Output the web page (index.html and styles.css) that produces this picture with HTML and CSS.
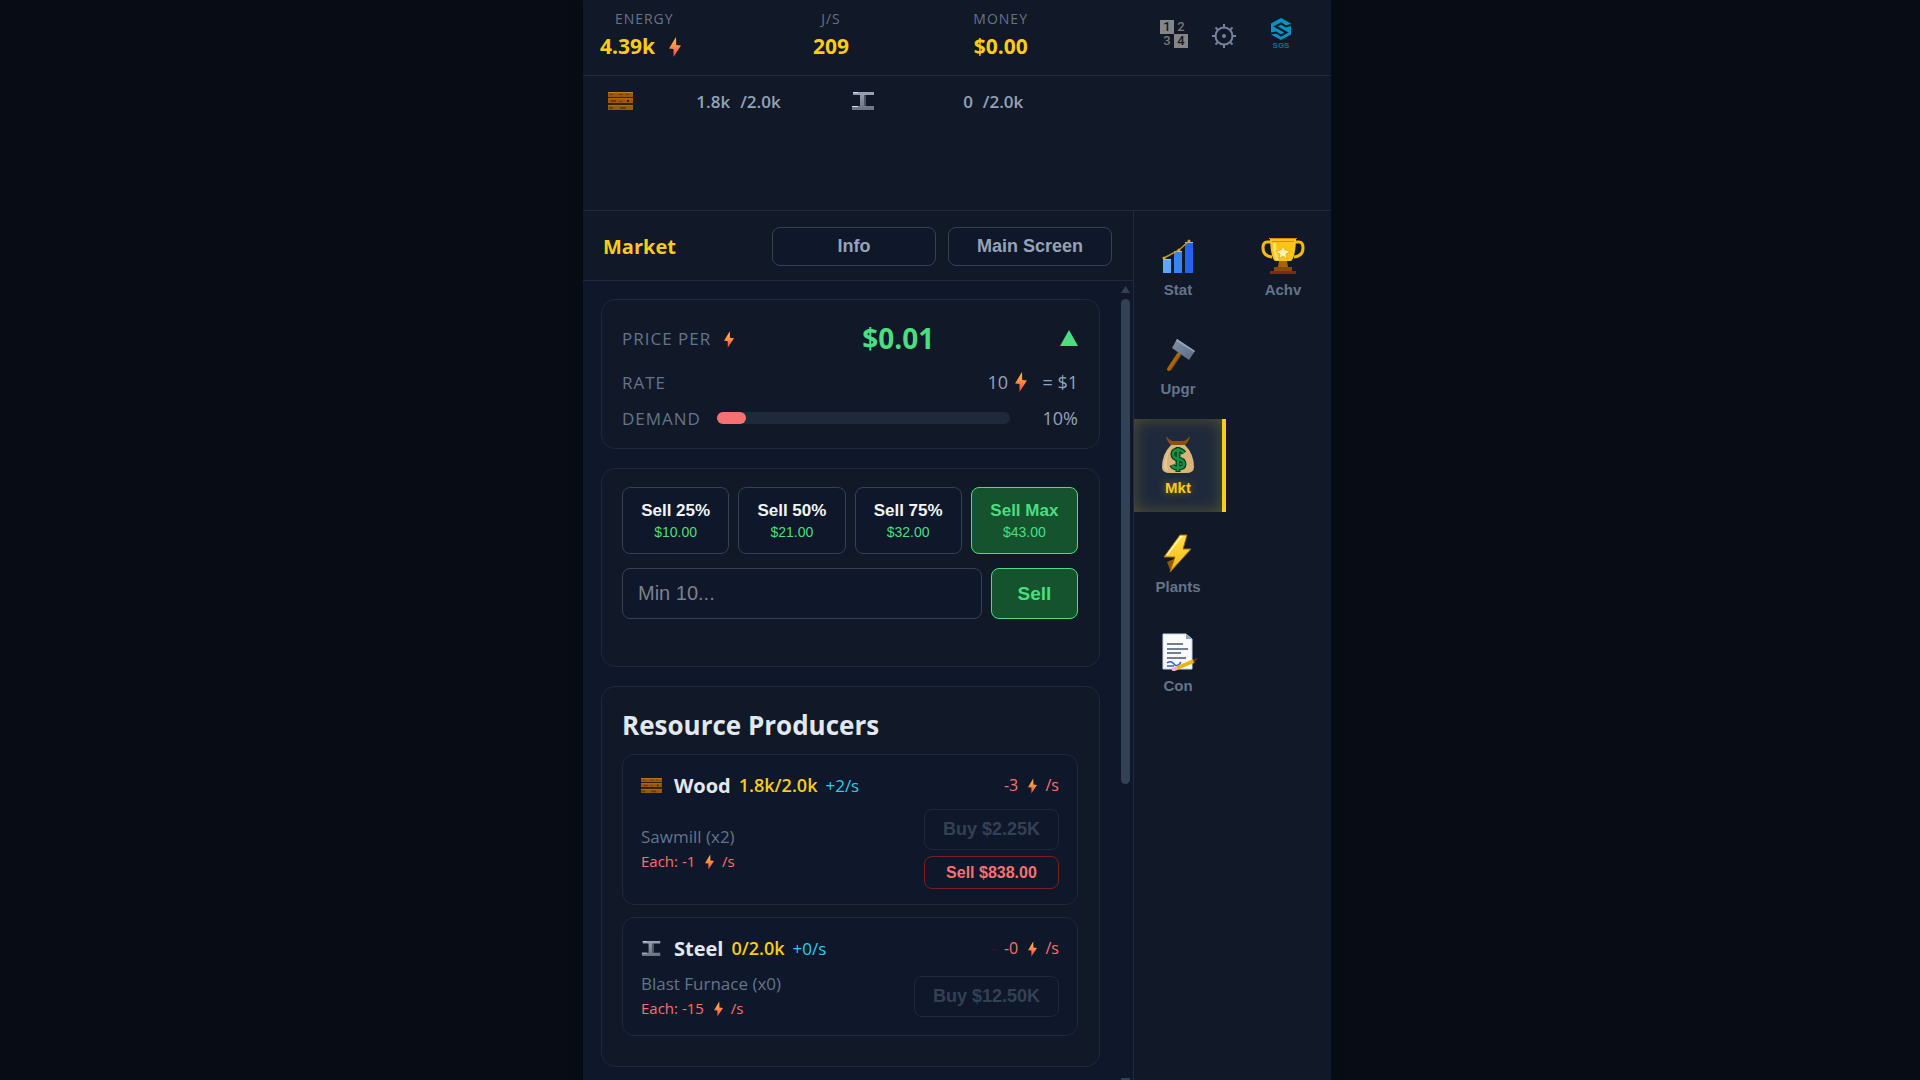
FILE: index.html
```html
<!DOCTYPE html>
<html lang="en">
<head>
<meta charset="utf-8">
<meta name="viewport" content="width=device-width, initial-scale=1">
<title>Market</title>
<link rel="stylesheet" href="styles.css">
</head>
<body>
<svg class="defs" aria-hidden="true">
  <defs>
    <linearGradient id="boltFill" x1="0" y1="0" x2="0" y2="1"><stop offset="0" stop-color="#ffbf47"/><stop offset=".5" stop-color="#ff8a45"/><stop offset="1" stop-color="#ef3f4a"/></linearGradient>
    <linearGradient id="steelFill" x1="0" y1="0" x2="0" y2="1"><stop offset="0" stop-color="#9ca3af"/><stop offset="1" stop-color="#6b7280"/></linearGradient>
    <linearGradient id="plantFill" x1="0" y1="0" x2="0" y2="1"><stop offset="0" stop-color="#ffe04a"/><stop offset="1" stop-color="#f5b80c"/></linearGradient>
    <linearGradient id="headFill" x1="0" y1="0" x2="1" y2="1"><stop offset="0" stop-color="#8391a7"/><stop offset="1" stop-color="#5b6a80"/></linearGradient>
    <symbol id="bolt" viewBox="0 0 12 20"><path fill="url(#boltFill)" d="M7 0 0 11.500 4.500 12 4.500 20 12 8.500 7.200 8Z"/></symbol>
    <symbol id="wood" viewBox="0 0 25 18">
      <path fill="#9a5a0e" d="M0 0h25v5H0zM0 6h25v5H0zM0 13h25v5H0z"/>
      <path fill="#c07a1a" d="M0 0h25v1H0z"/>
      <path fill="#b06c14" d="M0 6h25v1H0zM0 13h25v1H0z"/>
      <path fill="#6b3d0a" d="M2 2h3v1H2zM11 2h4v1h-4zM18 2h3v1h-3zM3 8h5v2H3zM11 9h3v1h-3zM1 15h4v2H1zM12 15h6v2h-6z"/>
      <path fill="#3a2006" d="M19 8h2v2h-2zM0 5h25v1H0zM0 11h25v2H0z"/>
    </symbol>
    <symbol id="steel" viewBox="0 0 23 18"><path fill="url(#steelFill)" d="M1 0h21v3h-8v11h8v4H0v-4h8V3H1z"/><path fill="#d6dae0" d="M1 0h5v1H1zM0 14h6v1H0z"/><path fill="#4b5563" d="M12 3h2v11h-2z"/></symbol>
  </defs>
</svg>

<div class="app">
  <header class="topbar">
    <div class="stats">
      <div class="stat"><span class="stat-label">ENERGY</span><span class="stat-value">4.39k <svg class="bolt bolt-lg"><use href="#bolt"/></svg></span></div>
      <div class="stat"><span class="stat-label">J/S</span><span class="stat-value">209</span></div>
      <div class="stat"><span class="stat-label">MONEY</span><span class="stat-value">$0.00</span></div>
    </div>
    <div class="tools">
      <button class="tool tool-num" aria-label="Number format">
        <span class="num on">1</span><span class="num">2</span><span class="num">3</span><span class="num on">4</span>
      </button>
      <button class="tool" aria-label="Settings">
        <svg width="24" height="24" viewBox="0 0 24 24" fill="none" stroke="#7683a0" stroke-width="2"><circle cx="12" cy="12" r="8.500"/><path d="M12 0v3M12 21v3M0 12h3M21 12h3M3.500 3.500l2 2M18.500 18.500l2 2M3.500 20.500l2-2M18.500 5.500l2-2"/><circle cx="12" cy="12" r="1" fill="#7683a0"/></svg>
      </button>
      <a class="logo" href="#" aria-label="SGS">
        <svg width="20" height="22" viewBox="0 0 20 22"><path fill="#0794c4" d="M10 0 20 5.500v11L10 22 0 16.500v-11z"/><path fill="none" stroke="#111827" stroke-width="2" d="M20 7 15 8.500 10 5.500 4.500 8.500 15.500 14.500 10 17.500 5 14.500 0 15.500"/></svg>
        <span>SGS</span>
      </a>
    </div>
  </header>

  <section class="resources">
    <div class="resource"><svg class="res-icon" width="25" height="18"><use href="#wood"/></svg><span class="res-amount"><span>1.8k</span><span>/2.0k</span></span></div>
    <div class="resource"><svg class="res-icon" width="25" height="18"><use href="#steel"/></svg><span class="res-amount"><span>0</span><span>/2.0k</span></span></div>
  </section>

  <div class="main">
    <main class="panel">
      <div class="panel-head">
        <h1>Market</h1>
        <button class="head-btn">Info</button>
        <button class="head-btn">Main Screen</button>
      </div>
      <div class="panel-body">
        <div class="cards">
          <section class="card prices">
            <div class="row row-price"><span class="label">PRICE PER <svg class="bolt bolt-md"><use href="#bolt"/></svg></span><strong class="price">$0.01</strong><svg class="up" width="18" height="16" viewBox="0 0 18 16"><path fill="#4ade80" d="M9 0 18 16H0z"/></svg></div>
            <div class="row row-rate"><span class="label">RATE</span><span class="value">10 <svg class="bolt bolt-lg"><use href="#bolt"/></svg> = $1</span></div>
            <div class="row row-demand"><span class="label">DEMAND</span><div class="meter"><div class="meter-fill" style="width:10%"></div></div><span class="value pct">10%</span></div>
          </section>

          <section class="card trade">
            <div class="quick">
              <button class="quick-btn">Sell 25%<small>$10.00</small></button>
              <button class="quick-btn">Sell 50%<small>$21.00</small></button>
              <button class="quick-btn">Sell 75%<small>$32.00</small></button>
              <button class="quick-btn max">Sell Max<small>$43.00</small></button>
            </div>
            <div class="sell-row">
              <input class="amount" type="text" placeholder="Min 10..." aria-label="Amount to sell">
              <button class="sell-btn">Sell</button>
            </div>
          </section>

          <section class="card producers">
            <h2>Resource Producers</h2>
            <article class="producer">
              <div class="prod-head"><svg class="prod-icon" width="21" height="15"><use href="#wood"/></svg><h3>Wood</h3><span class="stock">1.8k/2.0k</span><span class="gain">+2/s</span><span class="drain">-3 <svg class="bolt bolt-sm"><use href="#bolt"/></svg> /s</span></div>
              <div class="prod-body">
                <div class="prod-info"><p class="plant">Sawmill (x2)</p><p class="each">Each: -1 <svg class="bolt bolt-sm"><use href="#bolt"/></svg> /s</p></div>
                <div class="prod-actions"><button class="buy" disabled>Buy $2.25K</button><button class="sell">Sell $838.00</button></div>
              </div>
            </article>
            <article class="producer">
              <div class="prod-head"><svg class="prod-icon" width="21" height="15"><use href="#steel"/></svg><h3>Steel</h3><span class="stock">0/2.0k</span><span class="gain">+0/s</span><span class="drain">-0 <svg class="bolt bolt-sm"><use href="#bolt"/></svg> /s</span></div>
              <div class="prod-body">
                <div class="prod-info"><p class="plant">Blast Furnace (x0)</p><p class="each">Each: -15 <svg class="bolt bolt-sm"><use href="#bolt"/></svg> /s</p></div>
                <div class="prod-actions"><button class="buy" disabled>Buy $12.50K</button></div>
              </div>
            </article>
          </section>
        </div>
        <div class="scrollbar" aria-hidden="true">
          <svg width="9" height="7" viewBox="0 0 9 7"><path fill="#334155" d="M4.500 0 9 7H0z"/></svg>
          <div class="thumb"></div>
          <svg width="9" height="3" viewBox="0 0 9 3"><path fill="#334155" d="M0 0h9v3H0z"/></svg>
        </div>
      </div>
    </main>

    <nav class="side">
      <button class="tab">
        <svg width="36" height="38" viewBox="0 0 36 38"><path fill="#60a5fa" d="M3 22h8v14H3z"/><path fill="#3b82f6" d="M14 14h8v22h-8z"/><path fill="#2563eb" d="M25 5h8v31h-8z"/><path fill="#93c5fd" d="M3 22h8v1H3zM14 14h8v1h-8zM25 5h8v1h-8z"/><path fill="none" stroke="#c79a15" stroke-width="1.500" d="M4 21 19 13 29 4"/><circle cx="4" cy="21" r="1.500" fill="#d9a81a"/><circle cx="19" cy="13" r="1.500" fill="#d9a81a"/><circle cx="29" cy="4" r="1.500" fill="#d9a81a"/></svg>
        Stat</button>
      <button class="tab">
        <svg width="44" height="38" viewBox="0 0 44 38"><path fill="none" stroke="#f5b80c" stroke-width="3" d="M12 5H6Q2 5 2 11q0 8 9 9M32 5h6q4 0 4 6 0 8-9 9"/><path fill="#fcc419" d="M9 1h26v3q-1 17-5 20h-16Q10 21 9 4z"/><path fill="#d98a06" d="M8 1h28v1H8zM11 4h22v1H11z"/><path fill="#ffe066" d="M12 6h3q0 10 3 17h-3q-3-6-3-17z"/><path fill="#fff3b0" stroke="#d98a06" stroke-width=".5" d="m22 9 2 4 5 1-4 3 1 5-4-3-4 3 1-5-4-3 5-1z"/><path fill="#a8620a" d="M18 24h8l1 6h-10z"/><path fill="#8a4a08" d="M13 30h18v4H13z"/><path fill="#7c2d12" d="M9 34h26v3H9z"/></svg>
        Achv</button>
      <button class="tab">
        <svg width="36" height="38" viewBox="0 0 36 38"><path stroke="#a8650f" stroke-width="4" stroke-linecap="round" d="M19 18 9 33"/><path stroke="#7a450a" stroke-width="1" d="M21 19 11 34"/><path fill="url(#headFill)" d="m17 3 18 12-6 9L12 12z"/><path fill="#94a3b8" d="m17 3 18 12-1 1L16 5z"/></svg>
        Upgr</button>
      <button class="tab active">
        <svg width="36" height="38" viewBox="0 0 36 38"><path fill="#8a5212" d="M6 1q3 4 6 5h12q3-1 6-5-1 6-5 9H11Q7 7 6 1z"/><path fill="#d8b47a" d="M11 10h14q9 9 9 22 0 6-8 6H10q-8 0-8-6 0-13 9-22z"/><path fill="#e5c795" d="M11 12q-7 9-7 19 0 4 4 5-3-13 3-24z"/><path fill="none" stroke="#063d18" stroke-width="5" d="M24 18q-2-3-6-3-5 0-5 4t5 5q6 1 6 5t-6 4q-5 0-6-3M18 12v25"/><path fill="none" stroke="#15924a" stroke-width="2.500" d="M24 18q-2-3-6-3-5 0-5 4t5 5q6 1 6 5t-6 4q-5 0-6-3M18 13v23"/></svg>
        Mkt</button>
      <button class="tab">
        <svg width="36" height="38" viewBox="0 0 36 38"><path fill="#8a5a0a" d="m7 28 9-4-5 14z"/><path fill="url(#plantFill)" stroke="#a86f08" stroke-width="1" d="M20 1h7l-4 14h8L10 38l5-15H4z"/><path fill="#fff2a0" d="M20 2h3L8 21H6z"/></svg>
        Plants</button>
      <button class="tab">
        <svg width="40" height="38" viewBox="0 0 40 38"><path fill="#f8fafc" stroke="#cbd5e1" stroke-width="1" d="M5 1h23l6 5v30H5z"/><path fill="#94a3b8" d="M28 1v5h6z"/><path stroke="#475569" stroke-width="1.500" d="M9 11h16M9 16h21M9 20h14M9 25h19"/><path fill="none" stroke="#3b5bdb" stroke-width="1.500" d="M9 30q4-3 7 1t7-2M9 33h7"/><path stroke="#eab308" stroke-width="4" d="m19 35 17-7"/><path stroke="#f9a8d4" stroke-width="4" d="m14 37 5-2"/><path fill="#5b3a08" d="m35 26 5-1-4 5z"/></svg>
        Con</button>
    </nav>
  </div>
</div>
</body>
</html>
```
FILE: styles.css
```css
* { box-sizing: border-box; }

body {
  margin: 0;
  padding-right: 6px;
  min-height: 100vh;
  background: #080d15;
  color: #e2e8f0;
  font-family: "Open Sans", "Noto Sans", sans-serif;
  font-size: 17px;
}

h1, h2, h3, p { margin: 0; }
button, input { font-family: "Liberation Sans", Arial, sans-serif; margin: 0; }
button { padding: 0; cursor: pointer; }
svg { flex: none; }

.defs { display: block; width: 0; height: 0; }

.app {
  display: flex;
  flex-direction: column;
  max-width: 748px;
  min-height: 100vh;
  margin: 0 auto;
  background: #111827;
  box-shadow: 0 0 12px rgba(0, 0, 0, 0.3);
}

/* top bar */
.topbar {
  display: flex;
  justify-content: space-between;
  padding: 8px 39px 8px 17px;
  height: 76px;
  border-bottom: 1px solid #1e293b;
}
.stats { display: flex; justify-content: space-between; width: 428px; }
.stat { display: flex; flex-direction: column; align-items: center; }
.stat-label { font-size: 14px; line-height: 22px; letter-spacing: 1px; color: #64748b; }
.stat-value { font-size: 21px; line-height: 32px; font-weight: 700; color: #facc15; }

.bolt { display: inline-block; vertical-align: -3px; }
.bolt-lg { width: 12px; height: 20px; margin: 0 8px; }
.bolt-md { width: 10px; height: 17px; margin: 0 3px 0 7px; }
.bolt-sm { width: 9px; height: 16px; margin: 0 4px 0 6px; }

.tools { display: flex; align-items: flex-start; gap: 24px; padding-top: 10px; }
.tool { border: 0; background: none; padding: 6px 0 0; }
.tool-num {
  display: grid;
  grid-template-columns: 14px 14px;
  grid-auto-rows: 14px;
  padding: 2px 0 0;
}
.num { font: 500 13px/14px Roboto, sans-serif; color: #777779; text-align: center; }
.num.on { background: #858487; color: #111827; }
.logo {
  display: flex;
  flex-direction: column;
  align-items: center;
  width: 22px;
  margin-left: 10px;
  color: #0b7298;
  font: 700 8px/12px "Liberation Sans", sans-serif;
  text-decoration: none;
}

/* resources */
.resources {
  display: grid;
  grid-template-columns: repeat(3, 1fr);
  padding: 10px;
  height: 135px;
  border-bottom: 1px solid #1e293b;
}
.resource {
  display: flex;
  justify-content: space-between;
  align-items: center;
  height: 30px;
  padding: 0 55px 0 15px;
}
.res-amount { display: flex; gap: 10px; font-size: 17px; font-weight: 600; color: #94a3b8; }

/* main split */
.main { display: flex; flex: 1; }
.panel {
  display: flex;
  flex-direction: column;
  flex: 1;
  min-width: 0;
  border-right: 1px solid #1e293b;
}
.panel-head {
  display: grid;
  grid-template-columns: 1fr 164px 164px;
  gap: 12px;
  align-items: center;
  height: 70px;
  padding: 2px 21px 0 20px;
  border-bottom: 1px solid #1e293b;
}
.panel-head h1 { font-size: 20px; font-weight: 700; color: #facc15; }
.head-btn {
  height: 39px;
  border: 1px solid #334155;
  border-radius: 8px;
  background: #0f172a;
  color: #94a3b8;
  font-size: 18px;
  font-weight: 700;
}

.panel-body { display: flex; flex: 1; background: #0f172a; }
.cards {
  display: flex;
  flex-direction: column;
  flex: 1;
  gap: 19px;
  padding: 18px 21px 14px 18px;
}
.scrollbar { display: flex; flex-direction: column; width: 12px; padding-top: 5px; }
.thumb { flex: none; width: 9px; height: 61%; margin: 6px 0 auto; border-radius: 5px; background: #334155; }

.card {
  padding: 18px 21px 18px 20px;
  border: 1px solid #1e293b;
  border-radius: 14px;
  background: #111827;
}
.row { display: flex; justify-content: space-between; align-items: center; }
.label { color: #64748b; letter-spacing: 1px; }
.value { font-size: 18px; color: #94a3b8; }
.prices { padding-top: 16px; padding-bottom: 12px; }
.row-price { height: 44px; }
.row-rate { height: 40px; padding-top: 4px; }
.row-rate .bolt { margin: 0 11px 0 2px; }
.row-demand { height: 36px; gap: 16px; }
.price { font-size: 28px; font-weight: 700; color: #4ade80; }
.meter { flex: 1; height: 12px; border-radius: 6px; background: #1e293b; }
.meter-fill { height: 12px; border-radius: 6px; background: #f87171; }
.pct { width: 52px; text-align: right; }

/* selling */
.trade { padding-bottom: 47px; }
.quick { display: grid; grid-template-columns: repeat(4, 1fr); gap: 9px; }
.quick-btn {
  display: flex;
  flex-direction: column;
  align-items: center;
  justify-content: center;
  height: 67px;
  border: 1px solid #334155;
  border-radius: 8px;
  background: #0f172a;
  color: #f1f5f9;
  font-size: 17px;
  line-height: 22px;
  font-weight: 700;
}
.quick-btn small { font-size: 14px; line-height: 20px; font-weight: 400; color: #4ade80; }
.quick-btn.max, .sell-btn { border-color: #4ade80; background: #14532d; color: #4ade80; }
.sell-row { display: flex; gap: 9px; margin-top: 14px; }
.amount {
  flex: 1;
  min-width: 0;
  height: 51px;
  padding: 0 15px;
  border: 1px solid #334155;
  border-radius: 8px;
  background: #0f172a;
  color: #e2e8f0;
  font-size: 20px;
}
.amount::placeholder { color: #7c818b; opacity: 1; }
.sell-btn {
  width: 87px;
  height: 51px;
  border: 1px solid #4ade80;
  border-radius: 8px;
  font-size: 19px;
  font-weight: 700;
}

/* producers */
.producers { padding-bottom: 30px; }
.producers h2 { font-size: 26px; line-height: 40px; font-weight: 700; margin-bottom: 9px; }
.producer {
  padding: 14px 18px 15px;
  border: 1px solid #1e293b;
  border-radius: 12px;
  background: #0f172a;
}
.producer + .producer { margin-top: 12px; }
.prod-head { display: flex; align-items: center; gap: 8px; height: 32px; margin-bottom: 8px; }
.prod-head h3 { font-size: 20px; font-weight: 700; margin-left: 4px; }
.stock { font-size: 18px; font-weight: 600; color: #facc15; }
.gain { font-size: 17px; color: #22d3ee; }
.drain { margin-left: auto; font-size: 16px; color: #f87171; }
.prod-body { display: flex; justify-content: space-between; align-items: center; }
.plant { font-size: 17px; line-height: 24px; color: #64748b; }
.each { font-size: 15px; line-height: 24px; color: #f87171; }
.prod-actions { display: flex; flex-direction: column; gap: 6px; }
.buy, .sell { border-radius: 8px; background: none; font-weight: 700; }
.buy { height: 41px; padding: 0 18px; border: 1px solid #1e293b; color: #334155; font-size: 18px; }
.sell { height: 33px; border: 1px solid #7f1d1d; color: #f87171; font-size: 16px; }

/* side navigation */
.side {
  display: grid;
  grid-template-columns: 92px 92px;
  grid-auto-rows: 93px;
  align-content: start;
  justify-content: space-between;
  row-gap: 6px;
  width: 197px;
  padding-top: 10px;
}
.tab {
  display: flex;
  flex-direction: column;
  align-items: center;
  justify-content: center;
  gap: 6px;
  border: 0;
  border-right: 4px solid transparent;
  background: none;
  color: #64748b;
  font-size: 15px;
  line-height: 18px;
  font-weight: 700;
}
.tab:nth-child(n + 3) { grid-column: 1; }
.tab.active {
  border-right-color: #facc15;
  background: #1e293b;
  box-shadow: inset 0 0 16px rgba(250, 204, 21, 0.25);
  color: #facc15;
  text-shadow: 0 0 8px rgba(250, 204, 21, 0.5);
}
```
